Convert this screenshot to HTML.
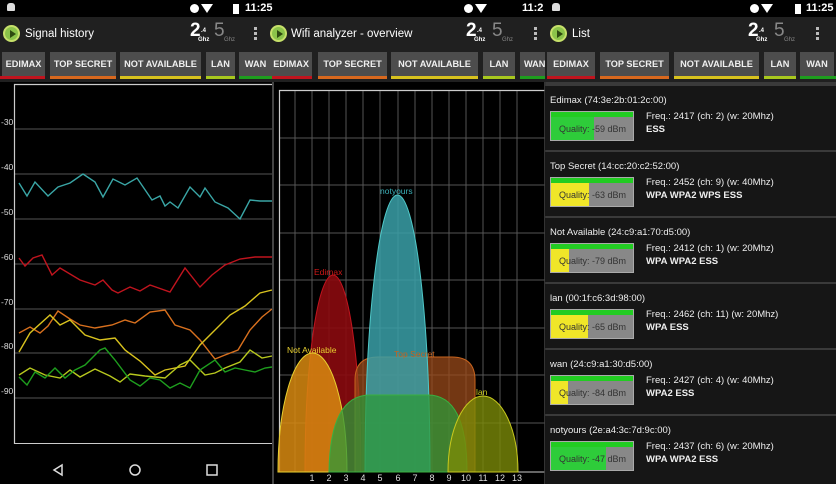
<!DOCTYPE html><html><head><meta charset="utf-8"><style>
*{margin:0;padding:0;box-sizing:border-box}
body{width:836px;height:484px;background:#000;position:relative;overflow:hidden;font-family:"Liberation Sans",sans-serif;color:#eee}
.a{position:absolute}
.sb{background:#000;height:17px;top:0}
.tb{background:#202020;height:65px;top:17px}
.t{font-size:11.5px;color:#fff;top:28px}
.btn{position:absolute;top:52px;height:24px;background:#4d4d4d;color:#f0f0f0;font-size:9.2px;font-weight:bold;text-align:center;line-height:24px;overflow:hidden;white-space:nowrap}
.ul{position:absolute;top:76px;height:3px}
.ic{position:absolute;top:25px;width:17px;height:17px;border-radius:50%;background:#8bc34a;border:2px solid #c6e06a}
.ic:after{content:"";position:absolute;left:5px;top:3px;border-left:6px solid #2e4a10;border-top:4px solid transparent;border-bottom:4px solid transparent}
.g24{position:absolute;top:20px;color:#fff;font-weight:bold;font-size:19px}
.g24 small{font-size:6px;position:absolute;left:11px;top:8px}
.g24 i{font-style:normal;font-size:6px;position:absolute;left:8px;top:17px}
.g5{position:absolute;top:20px;color:#888;font-size:19px}
.g5 i{font-style:normal;font-size:6px;position:absolute;left:10px;top:17px}
.dots{position:absolute;top:27px;width:3px;height:3px;background:#bbb;box-shadow:0 5px #bbb,0 10px #bbb}
.clk{position:absolute;top:2px;font-size:11px;font-weight:bold;color:#fff}
.it{position:absolute;left:545px;width:291px;height:64px;background:#161616}
.it .n{position:absolute;left:5px;top:9px;font-size:9.5px;color:#eee}
.it .q{position:absolute;left:5px;top:25px;width:84px;height:30px;background:#888;border:1px solid #aaa}
.it .q b{position:absolute;left:0;top:5px;bottom:0}
.it .q .top{position:absolute;left:0;top:0;right:0;height:5px;background:#2c2}
.it .q span{position:absolute;left:8px;top:12px;font-size:9px;color:#333}
.it .f{position:absolute;left:101px;top:24px;font-size:9.5px;color:#eee;line-height:13px}
.it .f b{font-weight:bold}
</style></head><body>
<div class="a sb" style="left:0;width:836px"></div>
<div class="clk" style="left:245px">11:25</div>
<div class="clk" style="left:522px">11:2</div>
<div class="clk" style="left:806px">11:25</div>
<div class="a" style="left:190px;top:4px;width:9px;height:9px;border-radius:50%;background:#fff"></div>
<div class="a" style="left:201px;top:4px;border-top:9px solid #fff;border-left:6px solid transparent;border-right:6px solid transparent"></div>
<div class="a" style="left:233px;top:4px;width:6px;height:10px;background:#fff"></div>
<div class="a" style="left:464px;top:4px;width:9px;height:9px;border-radius:50%;background:#fff"></div>
<div class="a" style="left:475px;top:4px;border-top:9px solid #fff;border-left:6px solid transparent;border-right:6px solid transparent"></div>
<div class="a" style="left:750px;top:4px;width:9px;height:9px;border-radius:50%;background:#fff"></div>
<div class="a" style="left:761px;top:4px;border-top:9px solid #fff;border-left:6px solid transparent;border-right:6px solid transparent"></div>
<div class="a" style="left:795px;top:4px;width:6px;height:10px;background:#fff"></div>
<div class="a" style="left:7px;top:3px;width:8px;height:8px;background:#ddd;border-radius:3px 3px 1px 1px"></div>
<div class="a" style="left:552px;top:3px;width:8px;height:8px;background:#ddd;border-radius:3px 3px 1px 1px"></div>

<div class="a tb" style="left:0;width:836px"></div>
<div class="ic" style="left:3px"></div><div class="a t" style="left:25px">Signal history</div>
<div class="ic" style="left:270px"></div><div class="a t" style="left:291px">Wifi analyzer - overview</div>
<div class="ic" style="left:550px"></div><div class="a t" style="left:572px">List</div>
<div class="g24" style="left:190px">2<small>.4</small><i>Ghz</i></div><div class="g5" style="left:214px">5<i>Ghz</i></div><div class="dots" style="left:254px"></div>
<div class="g24" style="left:466px">2<small>.4</small><i>Ghz</i></div><div class="g5" style="left:492px">5<i>Ghz</i></div><div class="dots" style="left:534px"></div>
<div class="g24" style="left:748px">2<small>.4</small><i>Ghz</i></div><div class="g5" style="left:774px">5<i>Ghz</i></div><div class="dots" style="left:816px"></div>

<div class="btn" style="left:2px;width:43px">EDIMAX</div><div class="ul" style="left:0;width:45px;background:#c0141e"></div>
<div class="btn" style="left:50px;width:66px">TOP SECRET</div><div class="ul" style="left:50px;width:66px;background:#d8681e"></div>
<div class="btn" style="left:120px;width:81px">NOT AVAILABLE</div><div class="ul" style="left:120px;width:81px;background:#d8c21e"></div>
<div class="btn" style="left:206px;width:29px">LAN</div><div class="ul" style="left:206px;width:29px;background:#a8c81e"></div>
<div class="btn" style="left:239px;width:33px">WAN</div><div class="ul" style="left:239px;width:33px;background:#1e9e1e"></div>
<div class="btn" style="left:272px;width:40px;text-align:right;padding-right:3px">EDIMAX</div><div class="ul" style="left:272px;width:40px;background:#c0141e"></div>
<div class="btn" style="left:318px;width:69px">TOP SECRET</div><div class="ul" style="left:318px;width:69px;background:#d8681e"></div>
<div class="btn" style="left:391px;width:87px">NOT AVAILABLE</div><div class="ul" style="left:391px;width:87px;background:#d8c21e"></div>
<div class="btn" style="left:483px;width:32px">LAN</div><div class="ul" style="left:483px;width:32px;background:#a8c81e"></div>
<div class="btn" style="left:520px;width:25px;text-align:left;padding-left:4px">WAN</div><div class="ul" style="left:520px;width:25px;background:#1e9e1e"></div>
<div class="btn" style="left:547px;width:48px">EDIMAX</div><div class="ul" style="left:547px;width:48px;background:#c0141e"></div>
<div class="btn" style="left:600px;width:69px">TOP SECRET</div><div class="ul" style="left:600px;width:69px;background:#d8681e"></div>
<div class="btn" style="left:674px;width:85px">NOT AVAILABLE</div><div class="ul" style="left:674px;width:85px;background:#d8c21e"></div>
<div class="btn" style="left:764px;width:32px">LAN</div><div class="ul" style="left:764px;width:32px;background:#a8c81e"></div>
<div class="btn" style="left:800px;width:34px">WAN</div><div class="ul" style="left:800px;width:36px;background:#1e9e1e"></div>

<svg class="a" style="left:0;top:0" width="836" height="484">
<g stroke="#555" stroke-width="1">
<line x1="14" y1="129" x2="272" y2="129"/><line x1="14" y1="174" x2="272" y2="174"/><line x1="14" y1="219" x2="272" y2="219"/><line x1="14" y1="264" x2="272" y2="264"/><line x1="14" y1="309" x2="272" y2="309"/><line x1="14" y1="353" x2="272" y2="353"/><line x1="14" y1="398" x2="272" y2="398"/>
</g>
<path d="M14.5 444 V84.5 H272" fill="none" stroke="#ccc" stroke-width="1.2"/>
<line x1="14" y1="443.5" x2="272" y2="443.5" stroke="#ccc"/>
<g font-size="8.5" fill="#ddd" font-family="Liberation Sans"><text x="1" y="125">-30</text><text x="1" y="170">-40</text><text x="1" y="215">-50</text><text x="1" y="260">-60</text><text x="1" y="305">-70</text><text x="1" y="349">-80</text><text x="1" y="394">-90</text></g>
<g fill="none" stroke-width="1.4">
<polyline stroke="#3aa6a6" points="19,183 27,196 35,182 48,196 58,187 70,183 83,174 95,182 103,197 113,179 125,185 137,178 152,200 160,196 165,206 170,202 178,208 190,187 200,197 205,188 215,202 228,208 240,219 250,200 260,201 272,201"/>
<polyline stroke="#c0141e" points="19,258 25,266 33,258 42,255 52,275 60,268 80,280 95,285 103,280 112,290 118,293 130,287 140,291 150,285 170,292 185,268 200,287 212,275 225,265 240,259 255,257 272,257"/>
<polyline stroke="#d8701e" points="19,333 30,327 40,333 48,326 58,311 70,319 80,325 95,328 112,325 125,320 135,323 150,312 165,310 175,325 190,330 200,340 215,359 225,355 238,350 250,330 262,317 272,309"/>
<polyline stroke="#d8c21e" points="19,352 30,333 50,315 60,325 70,320 85,335 100,340 115,338 125,350 140,361 155,375 165,370 185,366 200,345 215,330 230,315 245,306 260,293 272,290"/>
<polyline stroke="#b8c81e" points="19,375 30,368 45,375 60,378 70,370 80,377 95,369 110,376 120,382 130,374 145,376 165,378 180,365 190,360 205,375 215,373 225,368 240,362 250,350 262,358 272,356"/>
<polyline stroke="#1e9e1e" points="19,377 27,385 35,372 45,378 55,368 65,378 75,370 85,365 100,350 105,348 115,360 130,380 140,386 150,378 160,380 170,388 180,383 190,388 200,370 215,360 225,372 235,368 245,370 255,372 265,368 272,367"/>
</g>
<path d="M62 465 L54 470 L62 475 Z" fill="none" stroke="#ddd" stroke-width="1.5"/>
<circle cx="135" cy="470" r="5" fill="none" stroke="#ddd" stroke-width="1.5"/>
<rect x="207" y="465" width="10" height="10" fill="none" stroke="#ddd" stroke-width="1.5"/>
<line x1="273" y1="82" x2="273" y2="484" stroke="#444" stroke-width="2"/>

<g stroke="#555" stroke-width="1">
<line x1="279" y1="138" x2="545" y2="138"/><line x1="279" y1="185" x2="545" y2="185"/><line x1="279" y1="233" x2="545" y2="233"/><line x1="279" y1="280" x2="545" y2="280"/><line x1="279" y1="328" x2="545" y2="328"/><line x1="279" y1="375" x2="545" y2="375"/><line x1="279" y1="423" x2="545" y2="423"/>
<line x1="295" y1="90" x2="295" y2="472"/><line x1="312" y1="90" x2="312" y2="472"/><line x1="329" y1="90" x2="329" y2="472"/><line x1="346" y1="90" x2="346" y2="472"/><line x1="363" y1="90" x2="363" y2="472"/><line x1="380" y1="90" x2="380" y2="472"/><line x1="398" y1="90" x2="398" y2="472"/><line x1="415" y1="90" x2="415" y2="472"/><line x1="432" y1="90" x2="432" y2="472"/><line x1="449" y1="90" x2="449" y2="472"/><line x1="466" y1="90" x2="466" y2="472"/><line x1="483" y1="90" x2="483" y2="472"/><line x1="500" y1="90" x2="500" y2="472"/><line x1="517" y1="90" x2="517" y2="472"/>
</g>
<path d="M279.5 472 V90.5 H545" fill="none" stroke="#ccc" stroke-width="1.2"/>
<line x1="279" y1="472" x2="545" y2="472" stroke="#ccc"/>
<path d="M305 472 A28 197 0 0 1 361 472Z" fill="#8a0a0e" fill-opacity=".9" stroke="#c0141e"/>
<path d="M278 472 A34.5 119 0 0 1 347 472Z" fill="#d88a10" fill-opacity=".85" stroke="#e8d030"/>
<path d="M355 472 V380 Q355 357 378 357 H452 Q475 357 475 380 V472Z" fill="#9a4a1a" fill-opacity=".75" stroke="#c8641e"/>
<path d="M365 472 A32.5 277 0 0 1 430 472Z" fill="#3aa0a8" fill-opacity=".85" stroke="#50c8c8"/>
<path d="M329 472 Q330 395 370 395 H428 Q467 395 467 472Z" fill="#2e9a3a" fill-opacity=".75" stroke="#3ab040"/>
<path d="M448 472 A35 76 0 0 1 518 472Z" fill="#7a8a08" fill-opacity=".8" stroke="#c8c81e"/>
<g font-size="8.5" font-family="Liberation Sans">
<text x="314" y="275" fill="#d01818">Edimax</text><text x="380" y="194" fill="#3ab0b8">notyours</text><text x="287" y="353" fill="#e8d030">Not Available</text><text x="394" y="357" fill="#c8641e">Top Secret</text><text x="476" y="395" fill="#c8c81e">lan</text>
</g>
<g font-size="9" fill="#ddd" font-family="Liberation Sans" text-anchor="middle"><text x="312" y="481">1</text><text x="329" y="481">2</text><text x="346" y="481">3</text><text x="363" y="481">4</text><text x="380" y="481">5</text><text x="398" y="481">6</text><text x="415" y="481">7</text><text x="432" y="481">8</text><text x="449" y="481">9</text><text x="466" y="481">10</text><text x="483" y="481">11</text><text x="500" y="481">12</text><text x="517" y="481">13</text></g>
<line x1="545" y1="82" x2="545" y2="484" stroke="#444" stroke-width="1.5"/>
</svg>

<div class="a" style="left:546px;top:82px;width:290px;height:402px;background:#3a3a3a"></div>
<div class="it" style="top:86px"><div class="n">Edimax (74:3e:2b:01:2c:00)</div><div class="q"><div class="top"></div><b style="width:43px;background:#2ecc3a"></b><span>Quality: -59 dBm</span></div><div class="f">Freq.: 2417 (ch: 2) (w: 20Mhz)<br><b>ESS</b></div></div>
<div class="it" style="top:152px"><div class="n">Top Secret (14:cc:20:c2:52:00)</div><div class="q"><div class="top"></div><b style="width:38px;background:#f0e628"></b><span>Quality: -63 dBm</span></div><div class="f">Freq.: 2452 (ch: 9) (w: 40Mhz)<br><b>WPA WPA2 WPS ESS</b></div></div>
<div class="it" style="top:218px"><div class="n">Not Available (24:c9:a1:70:d5:00)</div><div class="q"><div class="top"></div><b style="width:18px;background:#f0e628"></b><span>Quality: -79 dBm</span></div><div class="f">Freq.: 2412 (ch: 1) (w: 20Mhz)<br><b>WPA WPA2 ESS</b></div></div>
<div class="it" style="top:284px"><div class="n">lan (00:1f:c6:3d:98:00)</div><div class="q"><div class="top"></div><b style="width:37px;background:#f0e628"></b><span>Quality: -65 dBm</span></div><div class="f">Freq.: 2462 (ch: 11) (w: 20Mhz)<br><b>WPA ESS</b></div></div>
<div class="it" style="top:350px"><div class="n">wan (24:c9:a1:30:d5:00)</div><div class="q"><div class="top"></div><b style="width:17px;background:#f0e628"></b><span>Quality: -84 dBm</span></div><div class="f">Freq.: 2427 (ch: 4) (w: 40Mhz)<br><b>WPA2 ESS</b></div></div>
<div class="it" style="top:416px;height:68px"><div class="n">notyours (2e:a4:3c:7d:9c:00)</div><div class="q"><div class="top"></div><b style="width:55px;background:#2ecc3a"></b><span>Quality: -47 dBm</span></div><div class="f">Freq.: 2437 (ch: 6) (w: 20Mhz)<br><b>WPA WPA2 ESS</b></div></div>
</body></html>
